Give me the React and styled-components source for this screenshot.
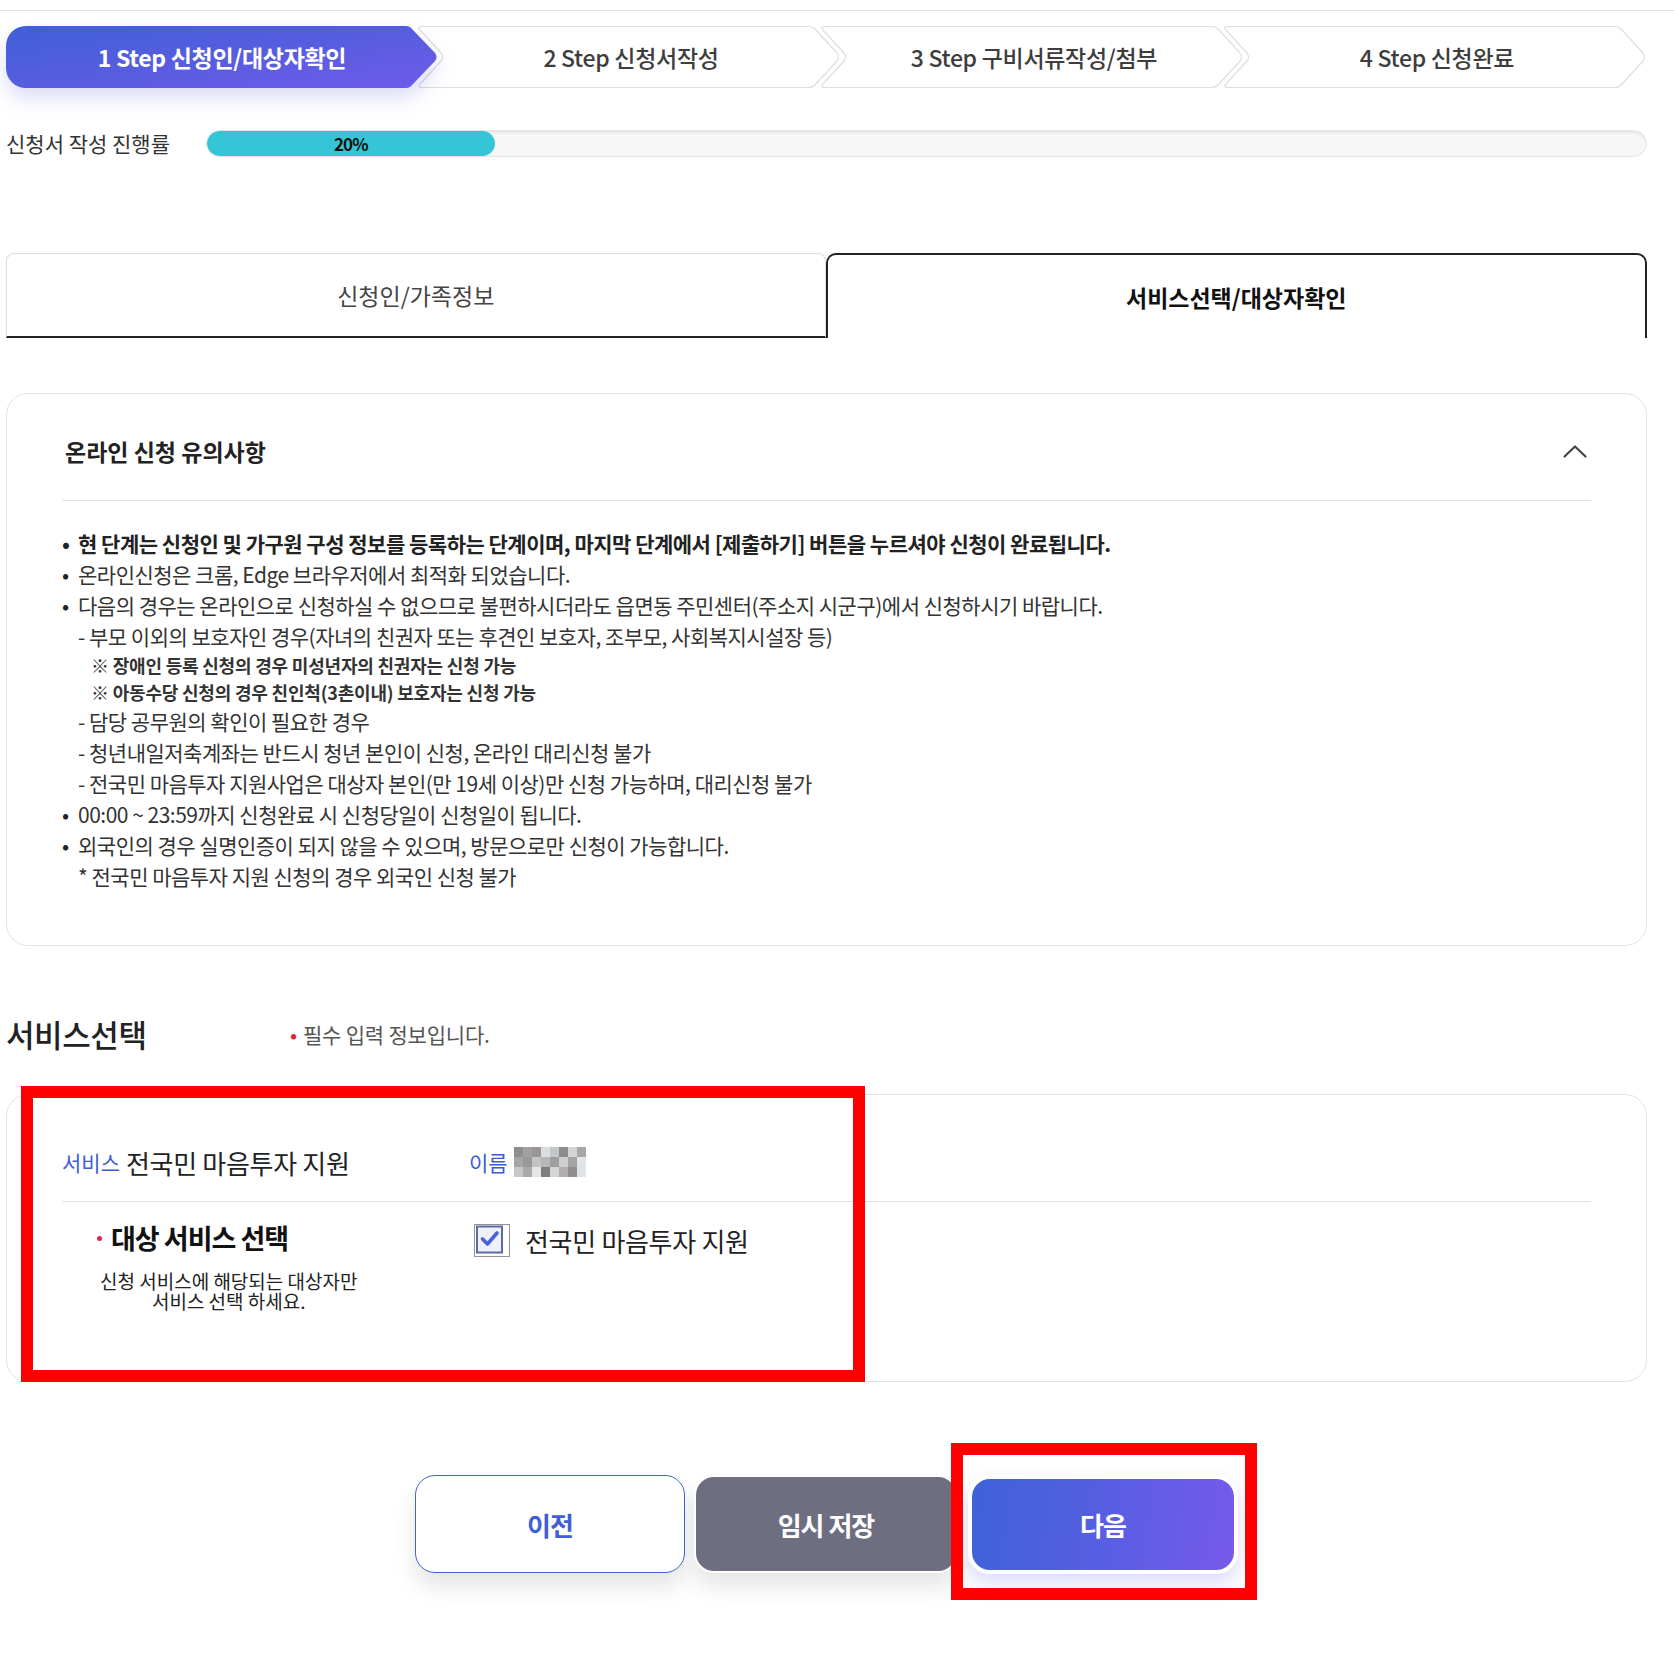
import React from "react";
import styled, { createGlobalStyle } from "styled-components";

const FONT = `"Noto Sans CJK KR", "Noto Sans", sans-serif`;

const GlobalStyle = createGlobalStyle`
  body {
    margin: 0;
    background: #fff;
    font-family: ${FONT};
    color: #222;
  }
  * { box-sizing: border-box; }
`;

const steps = [
  "1 Step 신청인/대상자확인",
  "2 Step 신청서작성",
  "3 Step 구비서류작성/첨부",
  "4 Step 신청완료",
];

const notices = [
  { type: "bullet", strong: true, text: "현 단계는 신청인 및 가구원 구성 정보를 등록하는 단계이며, 마지막 단계에서 [제출하기] 버튼을 누르셔야 신청이 완료됩니다." },
  { type: "bullet", text: "온라인신청은 크롬, Edge 브라우저에서 최적화 되었습니다." },
  { type: "bullet", text: "다음의 경우는 온라인으로 신청하실 수 없으므로 불편하시더라도 읍면동 주민센터(주소지 시군구)에서 신청하시기 바랍니다." },
  { type: "sub", text: "- 부모 이외의 보호자인 경우(자녀의 친권자 또는 후견인 보호자, 조부모, 사회복지시설장 등)" },
  { type: "note", text: "※ 장애인 등록 신청의 경우 미성년자의 친권자는 신청 가능" },
  { type: "note", text: "※ 아동수당 신청의 경우 친인척(3촌이내) 보호자는 신청 가능" },
  { type: "sub", text: "- 담당 공무원의 확인이 필요한 경우" },
  { type: "sub", text: "- 청년내일저축계좌는 반드시 청년 본인이 신청, 온라인 대리신청 불가" },
  { type: "sub", text: "- 전국민 마음투자 지원사업은 대상자 본인(만 19세 이상)만 신청 가능하며, 대리신청 불가" },
  { type: "bullet", text: "00:00 ~ 23:59까지 신청완료 시 신청당일이 신청일이 됩니다." },
  { type: "bullet", text: "외국인의 경우 실명인증이 되지 않을 수 있으며, 방문으로만 신청이 가능합니다." },
  { type: "sub", text: "* 전국민 마음투자 지원 신청의 경우 외국인 신청 불가" },
];

const mosaic = [
  "#8e8e8e", "#a3a09f", "#9b9595", "#d9dee0", "#c4c6c8", "#8c8c8c", "#d6d3d0", "#a9a6a8",
  "#a7a5a3", "#9a9898", "#c2c4c6", "#b5b7b9", "#9f9f9f", "#cfcfcf", "#a4a2a3", "#e2e5e7",
  "#cac8c6", "#aaaaaa", "#e4e6e8", "#7f7f7f", "#d3d5d7", "#b0aeaf", "#8f8d8e", "#dfe3e6",
];

const Page = styled.div`
  width: 1674px;
  padding-bottom: 84px;
`;

const TopRule = styled.div`
  margin-top: 10px;
  height: 1px;
  background: #e2e2e2;
`;

const Main = styled.main`
  padding: 15px 27px 0 6px;
`;

const StepBar = styled.ol`
  display: flex;
  margin: 0;
  padding: 0;
  list-style: none;
  height: 62px;
`;

const Step = styled.li`
  position: relative;
  flex: 0 0 ${(p) => (p.$first ? 432 : 426)}px;
  margin-left: ${(p) => (p.$first ? 0 : -23)}px;
  z-index: ${(p) => p.$z};
  display: flex;
  align-items: center;
  justify-content: center;
  padding-left: ${(p) => (p.$first ? 0 : 6)}px;
  font-size: 23px;
  letter-spacing: -0.3px;
  font-weight: ${(p) => (p.$active ? 700 : 500)};
  color: ${(p) => (p.$active ? "#fff" : "#3d3d3d")};

  svg {
    position: absolute;
    inset: 0;
    overflow: visible;
    filter: ${(p) => (p.$active ? "drop-shadow(0 10px 10px rgba(86, 96, 220, 0.22))" : "none")};
  }
  span {
    position: relative;
  }
`;

function StepShape({ first, width }) {
  const W = width;
  if (first) {
    return (
      <svg width={W} height="62" viewBox={`0 0 ${W} 62`}>
        <defs>
          <linearGradient id="stepGrad" x1="0" y1="0" x2="1" y2="1">
            <stop offset="0" stopColor="#3f5fd7" />
            <stop offset="1" stopColor="#6f5be8" />
          </linearGradient>
        </defs>
        <path
          d={`M20 0 H${W - 32} Q${W - 28} 0 ${W - 25} 4 L${W - 3} 27 Q${W} 31 ${W - 3} 35 L${W - 25} 58 Q${W - 28} 62 ${W - 32} 62 H20 A20 20 0 0 1 0 42 V20 A20 20 0 0 1 20 0Z`}
          fill="url(#stepGrad)"
        />
      </svg>
    );
  }
  return (
    <svg width={W} height="62" viewBox={`0 0 ${W} 62`}>
      <path
        d={`M7 0.5 H${W - 32} Q${W - 28} 0.5 ${W - 25} 4 L${W - 4} 27 Q${W - 1} 31 ${W - 4} 35 L${W - 25} 58 Q${W - 28} 61.5 ${W - 32} 61.5 H7 Q2 61.5 5 58 L26 35 Q29 31 26 27 L5 4 Q2 0.5 7 0.5Z`}
        fill="#fff"
        stroke="#dedede"
        strokeWidth="1.2"
      />
    </svg>
  );
}

const ProgressRow = styled.div`
  display: flex;
  align-items: center;
  margin-top: 40px;
`;

const ProgressLabel = styled.span`
  flex: 0 0 200px;
  font-size: 21px;
  color: #333;
`;

const Track = styled.div`
  flex: 1;
  height: 27px;
  border-radius: 14px;
  background: #f6f6f6;
  border: 1px solid #e4e4e4;
  box-shadow: inset 0 2px 2px rgba(0, 0, 0, 0.06);
  overflow: hidden;
`;

const Fill = styled.div`
  height: 100%;
  border-radius: 14px;
  background: #34c6d6;
  display: flex;
  align-items: center;
  justify-content: center;
  font-size: 17px;
  font-weight: 700;
  letter-spacing: -0.8px;
  color: #111;
`;

const Tabs = styled.div`
  display: flex;
  margin-top: 95px;
  height: 85px;
`;

const Tab = styled.button`
  flex: 1;
  font-family: ${FONT};
  font-size: 23px;
  background: #fff;
  cursor: pointer;
  color: ${(p) => (p.$active ? "#111" : "#444")};
  font-weight: ${(p) => (p.$active ? 700 : 400)};
  border: ${(p) => (p.$active ? "2px solid #222" : "1px solid #dcdcdc")};
  border-bottom: ${(p) => (p.$active ? "none" : "2px solid #222")};
  border-radius: ${(p) => (p.$active ? "10px 10px 0 0" : "8px 8px 0 0")};
`;

const Card = styled.section`
  position: relative;
  border: 1px solid #e2e2e2;
  border-radius: 22px;
  padding: 0 55px;
  margin-top: ${(p) => p.$mt}px;
`;

const CardHead = styled.div`
  height: 107px;
  padding-top: 8px;
  display: flex;
  align-items: center;
  justify-content: space-between;
  border-bottom: 1px solid #e2e2e2;
  padding-right: 4px;
`;

const CardTitle = styled.h3`
  margin: 0 0 0 3px;
  font-size: 23px;
  font-weight: 700;
  color: #222;
`;

const NoticeList = styled.ul`
  list-style: none;
  margin: 0;
  padding: 27px 0 53px;
`;

const Notice = styled.li`
  display: flex;
  font-size: ${(p) => (p.$type === "note" ? 18 : 21)}px;
  line-height: ${(p) => (p.$type === "note" ? 27 : 31)}px;
  letter-spacing: ${(p) => (p.$type === "note" ? -0.2 : -0.5)}px;
  font-weight: ${(p) => (p.$strong || p.$type === "note" ? 700 : 400)};
  color: ${(p) => (p.$strong ? "#222" : "#333")};
  padding-left: ${(p) => (p.$type === "note" ? 29 : p.$type === "sub" ? 16 : 0)}px;
  white-space: nowrap;

  &::before {
    content: ${(p) => (p.$type === "bullet" ? '"•"' : '""')};
    flex: 0 0 ${(p) => (p.$type === "bullet" ? 16 : 0)}px;
    color: #222;
  }
`;

const SectionHead = styled.div`
  display: flex;
  align-items: center;
  height: 50px;
  margin-top: 62px;
`;

const SectionTitle = styled.h2`
  flex: 0 0 284px;
  margin: 0;
  font-size: 31px;
  letter-spacing: -0.4px;
  font-weight: 500;
  color: #222;
`;

const Required = styled.span`
  font-size: 21px;
  letter-spacing: -0.2px;
  color: #555;
  padding-top: 2px;

  &::before {
    content: "•";
    color: #e3233b;
    margin-right: 6px;
  }
`;

const InfoRow = styled.div`
  display: grid;
  grid-template-columns: 407px 1fr;
  align-items: center;
  padding: 50px 0 22px;
  border-bottom: 1px solid #e2e2e2;
`;

const SelectRow = styled.div`
  display: grid;
  grid-template-columns: 407px 1fr;
  align-items: start;
  padding: 16px 0 70px;
`;

const Field = styled.div`
  display: flex;
  align-items: center;
  gap: ${(p) => p.$gap}px;
  height: 34px;
`;

const Key = styled.span`
  font-size: 21px;
  color: #3d5cd8;
`;

const Value = styled.span`
  font-size: 26px;
  letter-spacing: -0.3px;
  color: #222;
`;

const Mosaic = styled.div`
  display: grid;
  grid-template-columns: repeat(8, 9px);
  grid-template-rows: repeat(3, 10px);
`;

const Cell = styled.i`
  background: ${(p) => p.$c};
`;

const TargetBlock = styled.div`
  display: flex;
  flex-direction: column;
  align-items: flex-start;
  padding-left: 35px;
`;

const TargetLabel = styled.div`
  display: flex;
  align-items: center;
  font-size: 27px;
  line-height: 40px;
  letter-spacing: -1px;
  font-weight: 700;
  color: #111;

  &::before {
    content: "";
    width: 5px;
    height: 5px;
    border-radius: 50%;
    background: #e3233b;
    margin-right: 9px;
  }
`;

const TargetHelp = styled.p`
  margin: 13px 0 0 3px;
  font-size: 19px;
  line-height: 20px;
  color: #222;
  text-align: center;
`;

const CheckLabel = styled.label`
  display: flex;
  align-items: center;
  gap: 15px;
  height: 40px;
  margin: 2px 0 0 5px;
  font-size: 26px;
  letter-spacing: -0.3px;
  color: #222;
`;

const Annotation = styled.div`
  position: absolute;
  top: ${(p) => p.$top}px;
  left: ${(p) => p.$left}px;
  right: ${(p) => (p.$right === undefined ? "auto" : `${p.$right}px`)};
  bottom: ${(p) => (p.$bottom === undefined ? "auto" : `${p.$bottom}px`)};
  width: ${(p) => (p.$w ? `${p.$w}px` : "auto")};
  height: ${(p) => (p.$h ? `${p.$h}px` : "auto")};
  border: 12px solid #ff0000;
  pointer-events: none;
`;

const ButtonRow = styled.div`
  display: flex;
  justify-content: center;
  gap: 9px;
  margin-top: 93px;
`;

const Button = styled.button`
  position: relative;
  width: ${(p) => p.$w}px;
  height: ${(p) => p.$h}px;
  border-radius: 20px;
  font-family: ${FONT};
  font-size: 26px;
  letter-spacing: -1px;
  font-weight: 700;
  cursor: pointer;
`;

const PrevButton = styled(Button)`
  background: #fff;
  color: #3f5fd8;
  border: 1px solid #4062d8;
  box-shadow: 0 14px 22px rgba(0, 0, 0, 0.1);
`;

const SaveButton = styled(Button)`
  background: #6d6f81;
  color: #fff;
  border: 2px solid #fff;
  box-shadow: 0 14px 22px rgba(0, 0, 0, 0.1);
`;

const NextWrap = styled.div`
  position: relative;
  margin-left: 1px;
`;

const NextButton = styled(Button)`
  background: linear-gradient(100deg, #3d62d8 0%, #5a5ee2 55%, #775ae9 100%);
  color: #fff;
  border: 4px solid #fff;
  border-radius: 22px;
  box-shadow: 0 10px 20px rgba(86, 96, 220, 0.22);
`;

function ChevronUp() {
  return (
    <svg width="24" height="14" viewBox="0 0 24 14" fill="none">
      <polyline points="1.5,12.5 12,2.5 22.5,12.5" stroke="#444" strokeWidth="2.2" strokeLinecap="round" strokeLinejoin="round" />
    </svg>
  );
}

function CheckIcon() {
  return (
    <svg width="36" height="33" viewBox="0 0 36 33" fill="none">
      <rect x="0.5" y="0.5" width="35" height="32" stroke="#222" strokeWidth="1" strokeDasharray="1 1" />
      <rect x="3" y="2.5" width="25" height="26" fill="#eef1f9" stroke="#5d6aa6" strokeWidth="2" />
      <path d="M8.5 15 L13.5 20 L23 9" stroke="#4b63d9" strokeWidth="3.6" strokeLinecap="round" strokeLinejoin="round" />
    </svg>
  );
}

export default function App() {
  const progress = 20;
  return (
    <Page>
      <GlobalStyle />
      <TopRule />
      <Main>
        <StepBar>
          {steps.map((s, i) => (
            <Step key={s} $first={i === 0} $active={i === 0} $z={10 - i}>
              <StepShape first={i === 0} width={i === 0 ? 432 : 426} />
              <span>{s}</span>
            </Step>
          ))}
        </StepBar>

        <ProgressRow>
          <ProgressLabel>신청서 작성 진행률</ProgressLabel>
          <Track>
            <Fill style={{ width: `${progress}%` }}>{progress}%</Fill>
          </Track>
        </ProgressRow>

        <Tabs>
          <Tab>신청인/가족정보</Tab>
          <Tab $active>서비스선택/대상자확인</Tab>
        </Tabs>

        <Card $mt={55}>
          <CardHead>
            <CardTitle>온라인 신청 유의사항</CardTitle>
            <ChevronUp />
          </CardHead>
          <NoticeList>
            {notices.map((n, i) => (
              <Notice key={i} $type={n.type} $strong={n.strong}>
                {n.text}
              </Notice>
            ))}
          </NoticeList>
        </Card>

        <SectionHead>
          <SectionTitle>서비스선택</SectionTitle>
          <Required>필수 입력 정보입니다.</Required>
        </SectionHead>

        <Card $mt={36}>
          <InfoRow>
            <Field $gap={6}>
              <Key>서비스</Key>
              <Value>전국민 마음투자 지원</Value>
            </Field>
            <Field $gap={6}>
              <Key>이름</Key>
              <Mosaic>
                {mosaic.map((c, i) => (
                  <Cell key={i} $c={c} />
                ))}
              </Mosaic>
            </Field>
          </InfoRow>
          <SelectRow>
            <TargetBlock>
              <TargetLabel>대상 서비스 선택</TargetLabel>
              <TargetHelp>
                신청 서비스에 해당되는 대상자만
                <br />
                서비스 선택 하세요.
              </TargetHelp>
            </TargetBlock>
            <CheckLabel>
              <CheckIcon />
              전국민 마음투자 지원
            </CheckLabel>
          </SelectRow>
          <Annotation $top={-9} $left={14} $w={844} $h={296} />
        </Card>

        <ButtonRow>
          <PrevButton $w={270} $h={98}>이전</PrevButton>
          <SaveButton $w={264} $h={98}>임시 저장</SaveButton>
          <NextWrap>
            <NextButton $w={270} $h={99}>다음</NextButton>
            <Annotation $top={-32} $left={-17} $right={-19} $bottom={-26} />
          </NextWrap>
        </ButtonRow>
      </Main>
    </Page>
  );
}
